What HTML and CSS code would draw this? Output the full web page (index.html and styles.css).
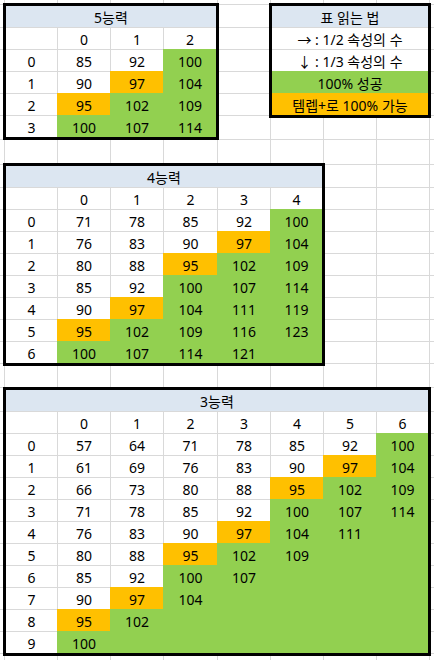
FILE: index.html
```html
<!DOCTYPE html>
<html lang="ko">
<head>
<meta charset="utf-8">
<title>능력 표</title>
<link rel="stylesheet" href="styles.css">
</head>
<body>
<main class="sheet">
  <section class="band band-1">
    <div class="tbl t5">
      <div class="title">5능력</div>
      <div class="c h"></div><div class="c">0</div><div class="c">1</div><div class="c">2</div>
      <div class="c h">0</div><div class="c">85</div><div class="c">92</div><div class="c g">100</div>
      <div class="c h">1</div><div class="c">90</div><div class="c o">97</div><div class="c g">104</div>
      <div class="c h">2</div><div class="c o">95</div><div class="c g">102</div><div class="c g">109</div>
      <div class="c h">3</div><div class="c g">100</div><div class="c g">107</div><div class="c g">114</div>
    </div>
    <div class="legend">
      <div class="title">표 읽는 법</div>
      <div class="row">→ : 1/2 속성의 수</div>
      <div class="row">↓ : 1/3 속성의 수</div>
      <div class="row g">100% 성공</div>
      <div class="row o">템렙+로 100% 가능</div>
    </div>
  </section>

  <section class="band band-2">
    <div class="tbl t4">
      <div class="title">4능력</div>
      <div class="c h"></div><div class="c">0</div><div class="c">1</div><div class="c">2</div><div class="c">3</div><div class="c">4</div>
      <div class="c h">0</div><div class="c">71</div><div class="c">78</div><div class="c">85</div><div class="c">92</div><div class="c g">100</div>
      <div class="c h">1</div><div class="c">76</div><div class="c">83</div><div class="c">90</div><div class="c o">97</div><div class="c g">104</div>
      <div class="c h">2</div><div class="c">80</div><div class="c">88</div><div class="c o">95</div><div class="c g">102</div><div class="c g">109</div>
      <div class="c h">3</div><div class="c">85</div><div class="c">92</div><div class="c g">100</div><div class="c g">107</div><div class="c g">114</div>
      <div class="c h">4</div><div class="c">90</div><div class="c o">97</div><div class="c g">104</div><div class="c g">111</div><div class="c g">119</div>
      <div class="c h">5</div><div class="c o">95</div><div class="c g">102</div><div class="c g">109</div><div class="c g">116</div><div class="c g">123</div>
      <div class="c h">6</div><div class="c g">100</div><div class="c g">107</div><div class="c g">114</div><div class="c g">121</div><div class="c g"></div>
    </div>
  </section>

  <section class="band band-3">
    <div class="tbl t3">
      <div class="title">3능력</div>
      <div class="c h"></div><div class="c">0</div><div class="c">1</div><div class="c">2</div><div class="c">3</div><div class="c">4</div><div class="c">5</div><div class="c">6</div>
      <div class="c h">0</div><div class="c">57</div><div class="c">64</div><div class="c">71</div><div class="c">78</div><div class="c">85</div><div class="c">92</div><div class="c g">100</div>
      <div class="c h">1</div><div class="c">61</div><div class="c">69</div><div class="c">76</div><div class="c">83</div><div class="c">90</div><div class="c o">97</div><div class="c g">104</div>
      <div class="c h">2</div><div class="c">66</div><div class="c">73</div><div class="c">80</div><div class="c">88</div><div class="c o">95</div><div class="c g">102</div><div class="c g">109</div>
      <div class="c h">3</div><div class="c">71</div><div class="c">78</div><div class="c">85</div><div class="c">92</div><div class="c g">100</div><div class="c g">107</div><div class="c g">114</div>
      <div class="c h">4</div><div class="c">76</div><div class="c">83</div><div class="c">90</div><div class="c o">97</div><div class="c g">104</div><div class="c g">111</div><div class="c g"></div>
      <div class="c h">5</div><div class="c">80</div><div class="c">88</div><div class="c o">95</div><div class="c g">102</div><div class="c g">109</div><div class="c g"></div><div class="c g"></div>
      <div class="c h">6</div><div class="c">85</div><div class="c">92</div><div class="c g">100</div><div class="c g">107</div><div class="c g"></div><div class="c g"></div><div class="c g"></div>
      <div class="c h">7</div><div class="c">90</div><div class="c o">97</div><div class="c g">104</div><div class="c g"></div><div class="c g"></div><div class="c g"></div><div class="c g"></div>
      <div class="c h">8</div><div class="c o">95</div><div class="c g">102</div><div class="c g"></div><div class="c g"></div><div class="c g"></div><div class="c g"></div><div class="c g"></div>
      <div class="c h">9</div><div class="c g">100</div><div class="c g"></div><div class="c g"></div><div class="c g"></div><div class="c g"></div><div class="c g"></div><div class="c g"></div>
    </div>
  </section>
</main>
</body>
</html>
```

FILE: styles.css
```css
* { box-sizing: border-box; }

html, body {
  margin: 0;
  padding: 0;
  background: #fff;
}

body {
  font-family: "Noto Sans", "Noto Sans CJK KR", sans-serif;
  font-size: 14px;
  color: #000;
}

/* spreadsheet canvas with its faint cell gridlines */
.sheet {
  --line: #d9d9d9;
  width: 434px;
  min-height: 660px;
  overflow: hidden;
  background-image:
    linear-gradient(var(--line), var(--line)),
    linear-gradient(var(--line), var(--line)),
    linear-gradient(var(--line), var(--line)),
    linear-gradient(var(--line), var(--line)),
    linear-gradient(var(--line), var(--line)),
    linear-gradient(var(--line), var(--line)),
    linear-gradient(var(--line), var(--line)),
    linear-gradient(var(--line), var(--line)),
    linear-gradient(var(--line), var(--line)),
    linear-gradient(var(--line), var(--line)),
    linear-gradient(var(--line), var(--line)),
    linear-gradient(var(--line), var(--line)),
    linear-gradient(var(--line), var(--line)),
    repeating-linear-gradient(to bottom, var(--line) 0 1px, transparent 1px 22px),
    repeating-linear-gradient(to bottom, var(--line) 0 1px, transparent 1px 22px),
    repeating-linear-gradient(to bottom, var(--line) 0 1px, transparent 1px 22px);
  background-size:
    1px 100%, 1px 100%, 1px 100%, 1px 100%, 1px 100%,
    1px 100%, 1px 100%, 1px 100%, 1px 100%,
    100% 1px, 100% 1px, 100% 1px, 100% 1px,
    100% 89px, 100% 177px, 100% 265px;
  background-position:
    4px 0, 57px 0, 110px 0, 163px 0, 217px 0,
    270px 0, 323px 0, 376px 0, 429px 0,
    0 4px, 0 139px, 0 164px, 0 387px,
    0 27px, 0 187px, 0 411px;
  background-repeat: no-repeat;
}

.band {
  display: flex;
  align-items: flex-start;
  padding-left: 3px;
}

.band-1 {
  padding-top: 3px;
  height: 140px;
}

.band-2 { margin-top: 23px; }
.band-3 { margin-top: 21px; }

/* bordered tables */
.tbl,
.legend {
  display: grid;
  grid-template-rows: 21px;
  grid-auto-rows: 22px;
  border: 3px solid #000;
  background: #fff;
}

.t5 { grid-template-columns: 51px 53px 53px 53px; }
.t4 { grid-template-columns: 51px 53px 53px 54px 53px 52px; }
.t3 { grid-template-columns: 51px 53px 53px 54px 53px 53px 53px 52px; }

.legend {
  width: 162px;
  margin-left: 50px;
  grid-template-columns: 1fr;
}

.title {
  grid-column: 1 / -1;
  background: #dce6f1;
  display: flex;
  align-items: center;
  justify-content: center;
  padding-top: 1px;
}

.c,
.row {
  display: flex;
  align-items: center;
  justify-content: center;
  border-top: 1px solid #d9d9d9;
  padding-top: 1px;
  white-space: nowrap;
}

.c { border-left: 1px solid #d9d9d9; }
.c.h { border-left: 0; }

.g {
  background: #92d050;
  border-color: transparent;
}

.o {
  background: #ffc000;
  border-color: transparent;
}
```
